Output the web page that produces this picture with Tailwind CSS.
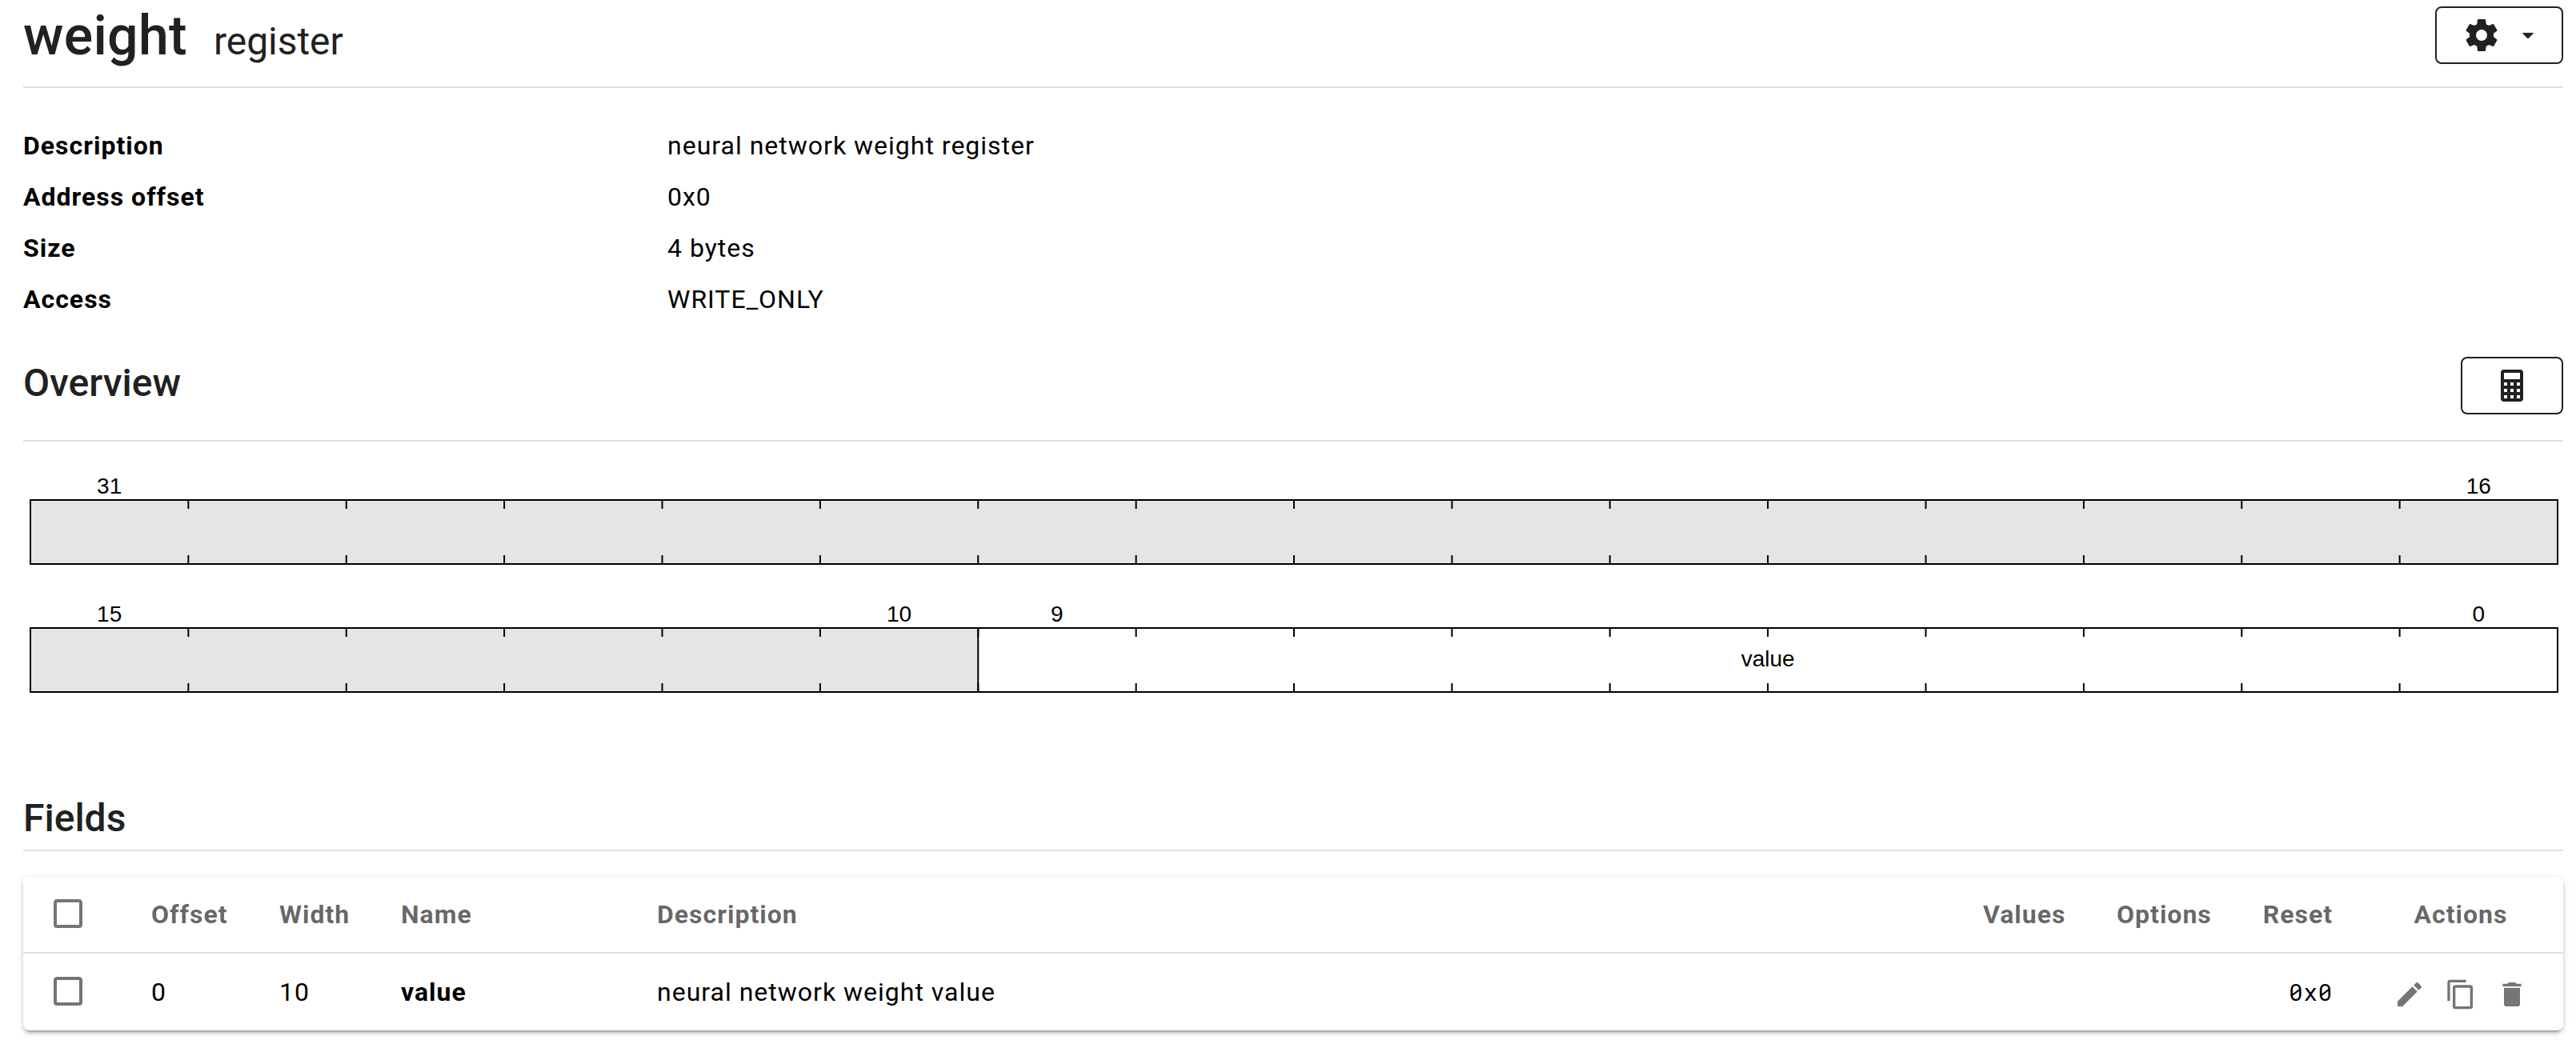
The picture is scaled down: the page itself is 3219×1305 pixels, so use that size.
<!DOCTYPE html>
<html lang="en">
<head>
<meta charset="utf-8">
<title>weight register</title>
<script src="https://cdn.jsdelivr.net/npm/@tailwindcss/browser@4"></script>
</head>
<body class="h-[1305px] overflow-hidden bg-white pr-4 pl-[29px] font-[Roboto,sans-serif] text-[32px] leading-[48px] tracking-[1px] text-black">
<header class="flex h-[110px] items-start justify-between border-b-2 border-[#e0e0e0] pt-2 text-[#212121]">
  <h1 class="-mt-[3px] flex items-baseline gap-[33px] text-[68px] leading-[80px] font-medium tracking-[0.3px]">weight <small class="text-[48px] font-normal -tracking-[0.05px]">register</small></h1>
  <button class="flex h-[72px] w-40 items-center gap-4 rounded-lg border-2 border-[#212121] pl-[32px]">
    <svg class="size-12" viewBox="0 0 24 24" fill="currentColor"><path d="M12,15.5A3.5,3.5 0 0,1 8.5,12A3.5,3.5 0 0,1 12,8.5A3.5,3.5 0 0,1 15.5,12A3.5,3.5 0 0,1 12,15.5M19.43,12.97C19.47,12.65 19.5,12.33 19.5,12C19.5,11.67 19.47,11.34 19.43,11L21.54,9.37C21.73,9.22 21.78,8.95 21.66,8.73L19.66,5.27C19.54,5.05 19.27,4.96 19.05,5.05L16.56,6.05C16.04,5.66 15.5,5.32 14.87,5.07L14.5,2.42C14.46,2.18 14.25,2 14,2H10C9.75,2 9.54,2.18 9.5,2.42L9.13,5.07C8.5,5.32 7.96,5.66 7.44,6.05L4.95,5.05C4.73,4.96 4.46,5.05 4.34,5.27L2.34,8.73C2.21,8.95 2.27,9.22 2.46,9.37L4.57,11C4.53,11.34 4.5,11.67 4.5,12C4.5,12.33 4.53,12.65 4.57,12.97L2.46,14.63C2.27,14.78 2.21,15.05 2.34,15.27L4.34,18.73C4.46,18.95 4.73,19.03 4.95,18.95L7.44,17.94C7.96,18.34 8.5,18.68 9.13,18.93L9.5,21.58C9.54,21.82 9.75,22 10,22H14C14.25,22 14.46,21.82 14.5,21.58L14.87,18.93C15.5,18.67 16.04,18.34 16.56,17.94L19.05,18.95C19.27,19.03 19.54,18.95 19.66,18.73L21.66,15.27C21.78,15.05 21.73,14.78 21.54,14.63L19.43,12.97Z"/></svg>
    <svg class="size-9" viewBox="0 0 24 24" fill="currentColor"><path d="M7,10L12,15L17,10H7Z"/></svg>
  </button>
</header>

<dl class="grid grid-cols-[805px_1fr] gap-y-4 pt-12">
  <dt class="font-bold">Description</dt><dd>neural network weight register</dd>
  <dt class="font-bold">Address offset</dt><dd>0x0</dd>
  <dt class="font-bold">Size</dt><dd>4 bytes</dd>
  <dt class="font-bold">Access</dt><dd>WRITE_ONLY</dd>
</dl>

<section class="mt-[48px] flex h-[106px] items-start justify-between border-b-2 border-[#e0e0e0] text-[#212121]">
  <h2 class="text-5xl leading-[66px] font-medium tracking-normal">Overview</h2>
  <button class="flex h-[72px] w-32 items-center justify-center rounded-lg border-2 border-[#212121]">
    <svg class="size-12" viewBox="0 0 24 24" fill="currentColor"><path d="M7,2H17A2,2 0 0,1 19,4V20A2,2 0 0,1 17,22H7A2,2 0 0,1 5,20V4A2,2 0 0,1 7,2M7,4V8H17V4H7M7,10V12H9V10H7M11,10V12H13V10H11M15,10V12H17V10H15M7,14V16H9V14H7M11,14V16H13V14H11M15,14V16H17V14H15M7,18V20H9V18H7M11,18V20H13V18H11M15,18V20H17V18H15Z"/></svg>
  </button>
</section>

<!-- Bit layout: 16 cells of 197.375px per lane -->
<svg class="block h-[440px] w-full font-['Liberation_Sans',Arial,sans-serif] text-[28px] tracking-normal" viewBox="29 552 3174 440" fill="black" text-anchor="middle">
  <defs>
    <g id="lane" stroke="black" stroke-width="2" fill="none">
      <path d="M234.375,631H3196" stroke-width="10" stroke-dasharray="2 195.375"/>
      <path d="M234.375,699H3196" stroke-width="10" stroke-dasharray="2 195.375"/>
      <rect x="38" y="625" width="3158" height="80"/>
    </g>
  </defs>
  <rect x="38" y="625" width="3158" height="80" fill="#e5e5e5"/>
  <use href="#lane"/>
  <text x="136.7" y="617">31</text>
  <text x="3097.3" y="617">16</text>
  <rect x="38" y="785" width="1184.25" height="80" fill="#e5e5e5"/>
  <use href="#lane" y="160"/>
  <path d="M1222.25,785V865" stroke="black" stroke-width="2"/>
  <text x="136.7" y="777">15</text>
  <text x="1123.5" y="777">10</text>
  <text x="1320.9" y="777">9</text>
  <text x="3097.3" y="777">0</text>
  <text x="2209.1" y="833">value</text>
</svg>

<section class="h-[72px] border-b-2 border-[#e0e0e0] text-[#212121]">
  <h2 class="text-5xl leading-[62px] font-medium tracking-normal">Fields</h2>
</section>

<main class="mt-8 rounded-lg bg-white shadow-[0_6px_2px_-4px_rgba(0,0,0,0.2),0_4px_4px_0_rgba(0,0,0,0.14),0_2px_10px_0_rgba(0,0,0,0.12)]">
  <div class="grid h-24 grid-cols-[128px_160px_152px_320px_1fr_167px_182px_152px_256px] items-center border-b-2 border-[#e0e0e0] font-bold text-black/60 *:px-8">
    <span><svg class="-mt-0.5 size-12 text-[#757575]" viewBox="0 0 24 24" fill="currentColor"><path d="M19,3H5C3.89,3 3,3.89 3,5V19A2,2 0 0,0 5,21H19A2,2 0 0,0 21,19V5C21,3.89 20.1,3 19,3M19,5V19H5V5H19Z"/></svg></span>
    <span>Offset</span><span>Width</span><span>Name</span><span>Description</span>
    <span class="text-right">Values</span><span class="text-right">Options</span><span class="text-right">Reset</span><span class="text-center">Actions</span>
  </div>
  <div class="grid h-24 grid-cols-[128px_160px_152px_320px_1fr_167px_182px_152px_256px] items-center *:px-8">
    <span><svg class="-mt-0.5 size-12 text-[#757575]" viewBox="0 0 24 24" fill="currentColor"><path d="M19,3H5C3.89,3 3,3.89 3,5V19A2,2 0 0,0 5,21H19A2,2 0 0,0 21,19V5C21,3.89 20.1,3 19,3M19,5V19H5V5H19Z"/></svg></span>
    <span>0</span><span>10</span><span class="font-bold">value</span><span>neural network weight value</span>
    <span></span><span></span>
    <span class="text-right font-['Roboto_Mono',monospace] text-[28.8px] tracking-[1px] [font-feature-settings:'zero']">0x0</span>
    <span class="flex justify-center gap-6 pt-1.5 text-[#757575]">
      <svg class="size-10" viewBox="0 0 24 24" fill="currentColor"><path d="M20.71,7.04C21.1,6.65 21.1,6 20.71,5.63L18.37,3.29C18,2.9 17.35,2.9 16.96,3.29L15.12,5.12L18.87,8.87M3,17.25V21H6.75L17.81,9.93L14.06,6.18L3,17.25Z"/></svg>
      <svg class="size-10" viewBox="0 0 24 24" fill="currentColor"><path d="M19,21H8V7H19M19,5H8A2,2 0 0,0 6,7V21A2,2 0 0,0 8,23H19A2,2 0 0,0 21,21V7A2,2 0 0,0 19,5M16,1H4A2,2 0 0,0 2,3V17H4V3H16V1Z"/></svg>
      <svg class="size-10" viewBox="0 0 24 24" fill="currentColor"><path d="M19,4H15.5L14.5,3H9.5L8.5,4H5V6H19M6,19A2,2 0 0,0 8,21H16A2,2 0 0,0 18,19V7H6V19Z"/></svg>
    </span>
  </div>
</main>
</body>
</html>
